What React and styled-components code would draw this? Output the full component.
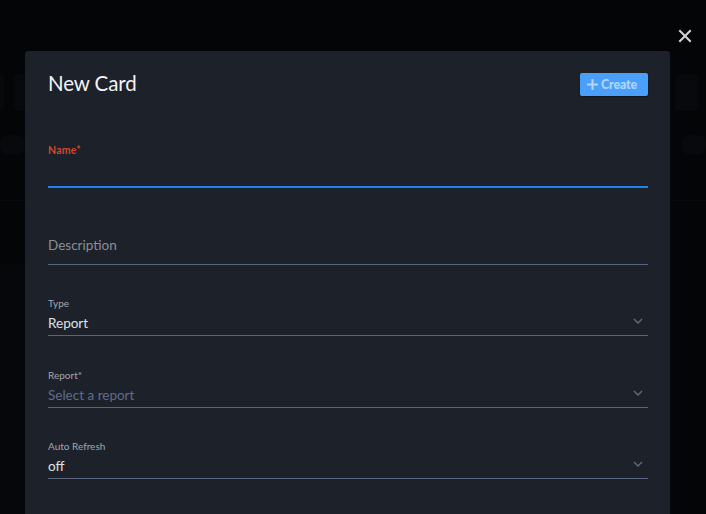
import React from "react";
import styled, { createGlobalStyle } from "styled-components";

const GlobalStyle = createGlobalStyle`
    html, body {
        margin: 0;
        padding: 0;
        background: #040507;
        overflow: hidden;
    }
    * {
        box-sizing: border-box;
    }
`;

const fields = [
    { label: "Type", value: "Report", gap: 31 },
    { label: "Report*", value: "Select a report", placeholder: true, gap: 32 },
    { label: "Auto Refresh", value: "off", gap: 31 },
];

export default function App() {
    return (
        <>
            <GlobalStyle/>
            <Page>
                <PageHeader>
                    <Block $w={4}/>
                    <Block $w={600}/>
                    <Block $w={23}/>
                </PageHeader>
                <PageRow>
                    <Pill $w={25}/>
                    <Pill $w={24}/>
                </PageRow>
                <PageDivider/>
                <PageSide/>
            </Page>

            <Overlay>
                <CloseButton aria-label="close">
                    <svg width="14" height="14" viewBox="0 0 14 14">
                        <path d="M2 2 L12 12 M12 2 L2 12" stroke="#d6d6d6" strokeWidth="2" strokeLinecap="square"/>
                    </svg>
                </CloseButton>

                <Modal>
                    <ModalHeader>
                        <Title>New Card</Title>
                        <CreateButton>
                            <svg width="13" height="13" viewBox="0 0 13 13">
                                <path d="M6.5 1 V12 M1 6.5 H12" stroke="#b3d5fb" strokeWidth="2"/>
                            </svg>
                            Create
                        </CreateButton>
                    </ModalHeader>

                    <NameField>
                        <NameLabel>Name*</NameLabel>
                    </NameField>

                    <DescriptionField>
                        <Value $muted>Description</Value>
                    </DescriptionField>

                    {fields.map((f, i) => (
                        <Field key={i} $gap={f.gap}>
                            <Label>{f.label}</Label>
                            <ValueRow>
                                <Value $placeholder={f.placeholder}>{f.value}</Value>
                                <Chevron width="10" height="6" viewBox="0 0 10 6">
                                    <path d="M1 1 L5 5 L9 1" fill="none" stroke="#666c79" strokeWidth="1.3"/>
                                </Chevron>
                            </ValueRow>
                        </Field>
                    ))}
                </Modal>
            </Overlay>
        </>
    );
}

const Page = styled.div`
    height: 514px;
    padding-top: 75px;
    display: flex;
    flex-direction: column;
`;

const PageHeader = styled.div`
    display: flex;
    justify-content: space-between;
    gap: 10px;
    height: 35px;
    padding-right: 8px;
`;

const Block = styled.div`
    width: ${p => p.$w}px;
    background: #08090c;
    border-radius: 2px;
    &:nth-child(2) {
        flex: 1;
    }
`;

const PageRow = styled.div`
    display: flex;
    justify-content: space-between;
    margin-top: 25px;
    height: 20px;
`;

const Pill = styled.div`
    width: ${p => p.$w}px;
    background: #08090c;
    border-radius: 8px;
`;

const PageDivider = styled.div`
    margin-top: 45px;
    border-top: 1px solid #090a0d;
`;

const PageSide = styled.div`
    margin-top: 64px;
    width: 25px;
    flex: 1;
    background: #06070a;
`;

const Overlay = styled.div`
    position: fixed;
    inset: 0;
    padding: 51px 36px 0 25px;
`;

const CloseButton = styled.button`
    position: absolute;
    top: 29px;
    left: 678px;
    background: none;
    border: 0;
    padding: 0;
    display: flex;
`;

const Modal = styled.div`
    width: 645px;
    height: 470px;
    background: #1d212a;
    border-radius: 3px 3px 0 0;
    padding: 22px 22px 0 23px;
    font-family: Lato, "Liberation Sans", sans-serif;
`;

const ModalHeader = styled.div`
    display: flex;
    justify-content: space-between;
    align-items: center;
    height: 23px;
`;

const Title = styled.h2`
    margin: -3px 0 0;
    font-size: 20.5px;
    font-weight: 400;
    color: #f2f3f5;
    letter-spacing: -0.1px;
    line-height: 21px;
`;

const CreateButton = styled.button`
    display: flex;
    align-items: center;
    gap: 2px;
    height: 23px;
    width: 68px;
    padding: 0 0 0 6px;
    border: 0;
    border-radius: 2px;
    background: #4a9ffb;
    color: #b3d5fb;
    font-family: Lato, "Liberation Sans", sans-serif;
    font-weight: 900;
    font-size: 12.5px;
    letter-spacing: -0.2px;
    box-shadow: 0 1px 2px rgba(0, 0, 0, 0.4);
`;

const NameField = styled.div`
    padding-top: 47px;
    padding-bottom: 29px;
    border-bottom: 2px solid #1e80f1;
`;

const NameLabel = styled.div`
    font-size: 10.5px;
    line-height: 14px;
    font-weight: 700;
    color: #d4462a;
    letter-spacing: 0.2px;
`;

const DescriptionField = styled.div`
    padding-top: 47px;
    padding-bottom: 9px;
    border-bottom: 1px solid #5a657f;
`;

const Field = styled.div`
    padding-top: ${p => p.$gap}px;
    border-bottom: 1px solid #5a657f;
`;

const Label = styled.div`
    font-size: 10px;
    line-height: 14px;
    color: #a3a7ae;
`;

const ValueRow = styled.div`
    display: flex;
    justify-content: space-between;
    align-items: center;
    margin-top: 3px;
    padding-bottom: 2px;
`;

const Value = styled.div`
    font-size: 13.5px;
    line-height: 20px;
    color: ${p => p.$placeholder ? "#5e6d8c" : p.$muted ? "#8b8f97" : "#e0e2e6"};
`;

const Chevron = styled.svg`
    margin-right: 5px;
    margin-top: -4px;
`;
